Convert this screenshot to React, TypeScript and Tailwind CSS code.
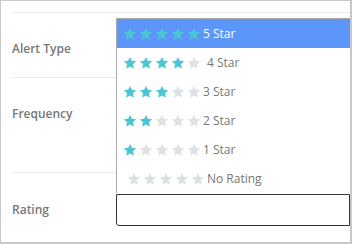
import React from "react";

const TEAL = "#4ec5d5";
const GREY = "#dce2e5";

function Star({ color }: { color: string }) {
  return (
    <svg width="14" height="14" viewBox="0 0 24 24" className="shrink-0">
      <polygon
        points="12,1.5 15.2,8.3 22.6,9.2 17.1,14.3 18.6,21.7 12,18 5.4,21.7 6.9,14.3 1.4,9.2 8.8,8.3"
        fill={color}
      />
    </svg>
  );
}

function Stars({ n }: { n: number }) {
  return (
    <div className="flex gap-[2px]">
      {[0, 1, 2, 3, 4].map((i) => (
        <Star key={i} color={i < n ? TEAL : GREY} />
      ))}
    </div>
  );
}

const items = [
  { n: 5, label: "5 Star", pl: "pl-[6px]", ml: "ml-[2px]" },
  { n: 4, label: "4 Star", pl: "pl-[6px]", ml: "ml-[6px]" },
  { n: 3, label: "3 Star", pl: "pl-[6px]", ml: "ml-[2px]" },
  { n: 2, label: "2 Star", pl: "pl-[6px]", ml: "ml-[2px]" },
  { n: 1, label: "1 Star", pl: "pl-[6px]", ml: "ml-[2px]" },
  { n: 0, label: "No Rating", pl: "pl-[10px]", ml: "ml-[2px]" },
];

export default function App() {
  return (
    <div
      className="relative w-[352px] h-[244px] overflow-hidden bg-white border-l border-t border-r-2 border-b-2 border-[#c8c8c8]"
      style={{ fontFamily: '"Open Sans", sans-serif' }}
    >
      <div className="pl-[11px] pt-[11px]">
        <div className="border-t border-[#ececec] h-[65px] pt-[27px]">
          <div className="text-[12px] leading-[18px] font-semibold text-[#777]">Alert Type</div>
        </div>
        <div className="border-t border-[#ececec] h-[95px] pt-[27px]">
          <div className="text-[12px] leading-[18px] font-semibold text-[#777]">Frequency</div>
        </div>
        <div className="border-t border-[#ececec] pt-[21px] flex items-center">
          <div className="w-[104px] text-[12px] leading-[18px] font-semibold text-[#777]">Rating</div>
          <div className="h-[32px] flex-1 border border-[#333] rounded-bl-[3px]" />
        </div>
      </div>

      <div className="absolute left-[115px] top-[17px] w-[240px] border-l border-t border-[#aaa] bg-white">
        {items.map((it, idx) => (
          <div
            key={it.label}
            className={`h-[29px] flex items-center ${it.pl} ${idx === 0 ? "bg-[#5b96f8] text-white" : "text-[#777]"}`}
          >
            <Stars n={it.n} />
            <span className={`${it.ml} text-[12px] leading-[16px]`}>{it.label}</span>
          </div>
        ))}
      </div>
    </div>
  );
}
